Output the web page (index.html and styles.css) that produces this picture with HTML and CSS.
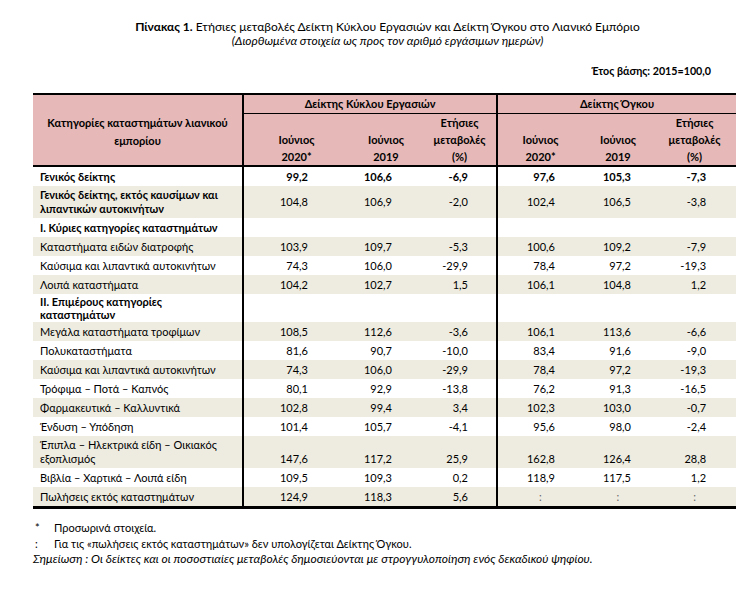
FILE: index.html
```html
<!DOCTYPE html>
<html lang="el">
<head>
<meta charset="utf-8">
<title>Πίνακας 1</title>
<link rel="stylesheet" href="styles.css">
</head>
<body>
<div class="page">
  <div class="title"><b>Πίνακας 1.</b> Ετήσιες μεταβολές Δείκτη Κύκλου Εργασιών και Δείκτη Όγκου στο Λιανικό Εμπόριο</div>
  <div class="subtitle">(Διορθωμένα στοιχεία ως προς τον αριθμό εργάσιμων ημερών)</div>
  <div class="base">Έτος βάσης: 2015=100,0</div>
  <table class="data">
    <colgroup>
      <col class="c0"><col class="c1"><col class="c2"><col class="c3"><col class="c4"><col class="c5"><col class="c6">
    </colgroup>
    <thead>
      <tr class="h1">
        <th rowspan="2" class="cat">Κατηγορίες καταστημάτων λιανικού<br>εμπορίου</th>
        <th colspan="3" class="grp sep">Δείκτης Κύκλου Εργασιών</th>
        <th colspan="3" class="grp sep">Δείκτης Όγκου</th>
      </tr>
      <tr class="h2">
        <th class="sep">Ιούνιος<br>2020*</th>
        <th>Ιούνιος<br>2019</th>
        <th>Ετήσιες<br>μεταβολές<br>(%)</th>
        <th class="sep">Ιούνιος<br>2020*</th>
        <th>Ιούνιος<br>2019</th>
        <th>Ετήσιες<br>μεταβολές<br>(%)</th>
      </tr>
    </thead>
    <tbody>
      <tr class="bold">
        <td class="lbl">Γενικός δείκτης</td>
        <td class="n1 sep">99,2</td><td class="n2">106,6</td><td class="n3">-6,9</td>
        <td class="n4 sep">97,6</td><td class="n5">105,3</td><td class="n6">-7,3</td>
      </tr>
      <tr class="alt two r32">
        <td class="lbl b">Γενικός δείκτης, εκτός καυσίμων και<br>λιπαντικών αυτοκινήτων</td>
        <td class="n1 sep">104,8</td><td class="n2">106,9</td><td class="n3">-2,0</td>
        <td class="n4 sep">102,4</td><td class="n5">106,5</td><td class="n6">-3,8</td>
      </tr>
      <tr>
        <td class="lbl b">I. Κύριες κατηγορίες καταστημάτων</td>
        <td class="sep"></td><td></td><td></td><td class="sep"></td><td></td><td></td>
      </tr>
      <tr class="alt">
        <td class="lbl">Καταστήματα ειδών διατροφής</td>
        <td class="n1 sep">103,9</td><td class="n2">109,7</td><td class="n3">-5,3</td>
        <td class="n4 sep">100,6</td><td class="n5">109,2</td><td class="n6">-7,9</td>
      </tr>
      <tr>
        <td class="lbl">Καύσιμα και λιπαντικά αυτοκινήτων</td>
        <td class="n1 sep">74,3</td><td class="n2">106,0</td><td class="n3">-29,9</td>
        <td class="n4 sep">78,4</td><td class="n5">97,2</td><td class="n6">-19,3</td>
      </tr>
      <tr class="alt">
        <td class="lbl">Λοιπά καταστήματα</td>
        <td class="n1 sep">104,2</td><td class="n2">102,7</td><td class="n3">1,5</td>
        <td class="n4 sep">106,1</td><td class="n5">104,8</td><td class="n6">1,2</td>
      </tr>
      <tr class="two r28">
        <td class="lbl b">II. Επιμέρους κατηγορίες<br>καταστημάτων</td>
        <td class="sep"></td><td></td><td></td><td class="sep"></td><td></td><td></td>
      </tr>
      <tr class="alt">
        <td class="lbl">Μεγάλα καταστήματα τροφίμων</td>
        <td class="n1 sep">108,5</td><td class="n2">112,6</td><td class="n3">-3,6</td>
        <td class="n4 sep">106,1</td><td class="n5">113,6</td><td class="n6">-6,6</td>
      </tr>
      <tr>
        <td class="lbl">Πολυκαταστήματα</td>
        <td class="n1 sep">81,6</td><td class="n2">90,7</td><td class="n3">-10,0</td>
        <td class="n4 sep">83,4</td><td class="n5">91,6</td><td class="n6">-9,0</td>
      </tr>
      <tr class="alt">
        <td class="lbl">Καύσιμα και λιπαντικά αυτοκινήτων</td>
        <td class="n1 sep">74,3</td><td class="n2">106,0</td><td class="n3">-29,9</td>
        <td class="n4 sep">78,4</td><td class="n5">97,2</td><td class="n6">-19,3</td>
      </tr>
      <tr>
        <td class="lbl">Τρόφιμα – Ποτά – Καπνός</td>
        <td class="n1 sep">80,1</td><td class="n2">92,9</td><td class="n3">-13,8</td>
        <td class="n4 sep">76,2</td><td class="n5">91,3</td><td class="n6">-16,5</td>
      </tr>
      <tr class="alt">
        <td class="lbl">Φαρμακευτικά – Καλλυντικά</td>
        <td class="n1 sep">102,8</td><td class="n2">99,4</td><td class="n3">3,4</td>
        <td class="n4 sep">102,3</td><td class="n5">103,0</td><td class="n6">-0,7</td>
      </tr>
      <tr>
        <td class="lbl">Ένδυση – Υπόδηση</td>
        <td class="n1 sep">101,4</td><td class="n2">105,7</td><td class="n3">-4,1</td>
        <td class="n4 sep">95,6</td><td class="n5">98,0</td><td class="n6">-2,4</td>
      </tr>
      <tr class="alt two r30 bottom">
        <td class="lbl">Έπιπλα – Ηλεκτρικά είδη – Οικιακός<br>εξοπλισμός</td>
        <td class="n1 sep">147,6</td><td class="n2">117,2</td><td class="n3">25,9</td>
        <td class="n4 sep">162,8</td><td class="n5">126,4</td><td class="n6">28,8</td>
      </tr>
      <tr>
        <td class="lbl">Βιβλία – Χαρτικά – Λοιπά είδη</td>
        <td class="n1 sep">109,5</td><td class="n2">109,3</td><td class="n3">0,2</td>
        <td class="n4 sep">118,9</td><td class="n5">117,5</td><td class="n6">1,2</td>
      </tr>
      <tr class="alt last">
        <td class="lbl">Πωλήσεις εκτός καταστημάτων</td>
        <td class="n1 sep">124,9</td><td class="n2">118,3</td><td class="n3">5,6</td>
        <td class="sep colon">:</td><td class="colon">:</td><td class="colon">:</td>
      </tr>
    </tbody>
  </table>
  <div class="notes">
    <div class="note"><span class="mark">*</span><span>Προσωρινά στοιχεία.</span></div>
    <div class="note"><span class="mark">:</span><span>Για τις «πωλήσεις εκτός καταστημάτων» δεν υπολογίζεται Δείκτης Όγκου.</span></div>
    <div class="remark">Σημείωση : Οι δείκτες και οι ποσοστιαίες μεταβολές δημοσιεύονται με στρογγυλοποίηση ενός δεκαδικού ψηφίου.</div>
  </div>
</div>
</body>
</html>
```

FILE: styles.css
```css
html, body {
  margin: 0;
  padding: 0;
  background: #ffffff;
}

body {
  font-family: Lato, "Open Sans", "DejaVu Sans", sans-serif;
  color: #000000;
}

.page {
  padding: 20px 6px 0 33px;
}

.title {
  font-size: 12px;
  line-height: 14px;
  text-align: center;
  padding-left: 6px;
}

.subtitle {
  font-size: 12px;
  line-height: 14px;
  font-style: italic;
  text-align: center;
  padding-left: 6px;
}

.base {
  font-size: 10.7px;
  font-weight: bold;
  line-height: 14px;
  text-align: right;
  padding-right: 25px;
  margin-top: 16px;
}

.data {
  margin-top: 15px;
  width: 703px;
  border-collapse: collapse;
  table-layout: fixed;
  font-size: 11px;
}

.c0 { width: 210px; }
.c1 { width: 106px; }
.c2 { width: 74px; }
.c3 { width: 74px; }
.c4 { width: 86px; }
.c5 { width: 70px; }
.c6 { width: 83px; }

.data thead th {
  background: #e6b8b7;
  font-weight: bold;
  text-align: center;
  padding: 0;
}

.data thead tr.h1 th {
  border-top: 2px solid #000;
  height: 18px;
  line-height: 18px;
}

.data thead th.grp {
  border-bottom: 1px solid #000;
}

.data thead th.cat {
  line-height: 16px;
  vertical-align: middle;
  padding-top: 4px;
}

.data thead tr.h2 th {
  height: 51px;
  line-height: 17px;
  vertical-align: bottom;
  padding-bottom: 0;
}

.data thead tr.h2 th,
.data thead th.cat {
  border-bottom: 2px solid #000;
}

.data .sep {
  border-left: 2px solid #000;
}

.data td {
  height: 19px;
  line-height: 15px;
  padding: 0;
  vertical-align: middle;
  white-space: nowrap;
}

.data tr.alt td {
  background: #eeece1;
}

.data tr.two td { line-height: 14px; }
.data tr.r32 td { height: 32px; }
.data tr.r28 td { height: 28px; line-height: 13.5px; }
.data tr.r30 td { height: 30px; }

.data tr.bottom td {
  vertical-align: bottom;
  padding-bottom: 2px;
}

.data td.lbl {
  padding-left: 7px;
  padding-right: 4px;
}

.data td.b,
.data tr.bold td {
  font-weight: bold;
}

.data tr.last td {
  border-bottom: 3px solid #000;
}

.n1, .n2, .n3, .n4, .n5, .n6 {
  text-align: right;
}

.data td.n1 { padding-right: 41px; }
.data td.n2 { padding-right: 31px; }
.data td.n3 { padding-right: 28px; }
.data td.n4 { padding-right: 28px; }
.data td.n5 { padding-right: 22px; }
.data td.n6 { padding-right: 30px; }

.data td.colon {
  text-align: center;
  color: #666;
}

.notes {
  margin-top: 11px;
  font-size: 11px;
  line-height: 15.5px;
}

.note {
  display: flex;
}

.note .mark {
  width: 19px;
  padding-left: 2px;
}

.remark {
  font-style: italic;
  font-size: 12px;
}
```
